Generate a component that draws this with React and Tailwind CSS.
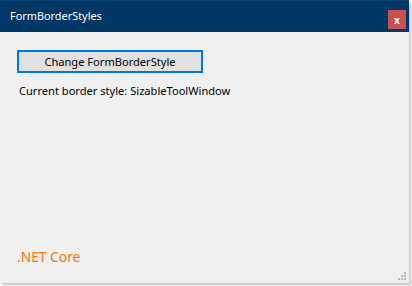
export default function App() {
  return (
    <div className="w-[412px] h-[286px] bg-white relative" style={{ fontFamily: '"Noto Sans", "Open Sans", sans-serif' }}>
      <div className="w-[409px] h-[283px] flex flex-col bg-[#f0f0f0] shadow-[2px_2px_3px_rgba(0,0,0,0.25)]">
        <div className="h-[32px] bg-[#003764] flex items-center justify-between pl-[10px] pr-[3px] border-t border-[#0d4170]">
          <span className="text-white text-[10.9px] leading-none">FormBorderStyles</span>
          <div className="w-[18px] h-[19px] bg-[#c75050] flex items-center justify-center mt-[6px]">
            <span className="text-white text-[10px] font-bold leading-none">x</span>
          </div>
        </div>
        <div className="flex-1 flex flex-col pl-[17px] pt-[18px] relative">
          <button className="w-[186px] h-[23px] border-2 border-[#0078d7] bg-[#e1e1e1] text-[11.1px] text-black flex items-center justify-center leading-none">
            Change FormBorderStyle
          </button>
          <div className="mt-[12px] ml-[2px] text-[11.1px] text-black leading-none">
            Current border style: SizableToolWindow
          </div>
          <div className="mt-auto mb-[19px] text-[13.8px] text-[#ff7300] leading-none">.NET Core</div>
          <div className="absolute right-[3px] bottom-[3px] grid grid-cols-3 gap-[1px]">
            <span className="w-[2px] h-[2px]" />
            <span className="w-[2px] h-[2px]" />
            <span className="w-[2px] h-[2px] bg-[#b4b4b4]" />
            <span className="w-[2px] h-[2px]" />
            <span className="w-[2px] h-[2px] bg-[#b4b4b4]" />
            <span className="w-[2px] h-[2px] bg-[#b4b4b4]" />
            <span className="w-[2px] h-[2px] bg-[#b4b4b4]" />
            <span className="w-[2px] h-[2px] bg-[#b4b4b4]" />
            <span className="w-[2px] h-[2px] bg-[#b4b4b4]" />
          </div>
        </div>
      </div>
    </div>
  );
}
